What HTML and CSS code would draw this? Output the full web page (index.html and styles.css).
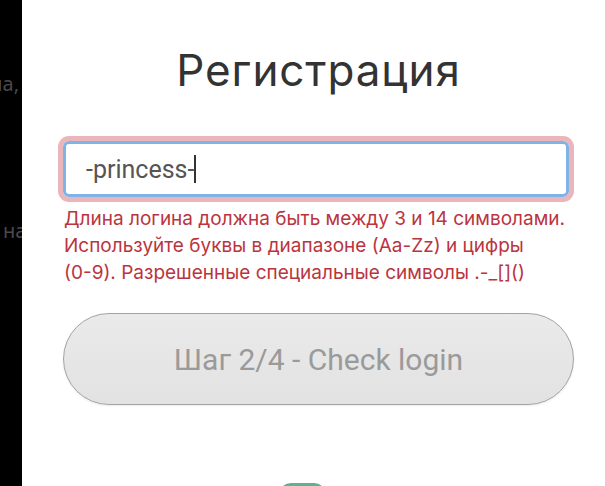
FILE: index.html
```html
<!DOCTYPE html>
<html lang="ru">
<head>
<meta charset="utf-8">
<title>Регистрация</title>
<link rel="stylesheet" href="styles.css">
</head>
<body>
<div class="screen">
  <div class="backdrop">
    <div class="peek peek-top">ла,</div>
    <div class="peek peek-mid">на</div>
  </div>
  <main class="panel">
    <h1 class="title">Регистрация</h1>
    <div class="field">
      <span class="field-value">-princess-</span><span class="caret"></span>
    </div>
    <p class="error">Длина логина должна быть между 3 и 14 символами. Используйте буквы в диапазоне <span class="nowrap">(Aa-Zz)</span> и цифры <span class="nowrap">(0-9).</span> Разрешенные специальные символы <span class="nowrap">.-_[]()</span></p>
    <button class="step-btn" type="button">Шаг 2/4 - Check login</button>
    <div class="bottom-nav">
      <span class="pill"></span>
    </div>
  </main>
</div>
</body>
</html>
```

FILE: styles.css
```css
html, body {
  margin: 0;
  padding: 0;
  height: 486px;
  overflow: hidden;
  background: #ffffff;
}

.screen {
  display: flex;
  height: 486px;
}

.backdrop {
  width: 22px;
  flex: none;
  background: #000000;
  overflow: hidden;
  display: flex;
  flex-direction: column;
  font-family: "Noto Sans", "DejaVu Sans", sans-serif;
  font-size: 20px;
  color: #4a4a4a;
  white-space: nowrap;
}

.peek {
  line-height: 24px;
  display: flex;
  flex: none;
}

.peek-top {
  margin-top: 72px;
  justify-content: flex-end;
  padding-right: 3px;
}

.peek-mid {
  margin-top: 123px;
  padding-left: 3px;
}

.panel {
  flex: 1;
  display: flex;
  flex-direction: column;
  padding: 0 31px 0 41px;
  background: #ffffff;
  overflow: hidden;
}

.panel > * {
  flex-shrink: 0;
}

.title {
  margin: 45px 0 0;
  font-family: Inter, "Noto Sans", sans-serif;
  font-weight: 400;
  font-size: 44px;
  line-height: 50px;
  color: #333333;
  text-align: center;
  letter-spacing: 0.9px;
}

.field {
  margin: 46px 5px 0 0;
  height: 50px;
  border: 3px solid #7fb3e6;
  border-radius: 6px;
  box-shadow: 0 0 0 5px #ebb6bb;
  display: flex;
  align-items: center;
  padding-left: 20px;
  font-family: Roboto, "Noto Sans", sans-serif;
  font-size: 25px;
  color: #555555;
}

.caret {
  width: 1.5px;
  height: 28px;
  background: #333333;
}

.error {
  margin: 8px 0 0 1px;
  font-family: Inter, "Noto Sans", sans-serif;
  font-size: 19px;
  line-height: 27px;
  color: #ba3440;
}

.nowrap {
  white-space: nowrap;
}

.step-btn {
  margin-top: 27px;
  height: 92px;
  border: 1px solid #a3a3a3;
  border-radius: 46px;
  background: linear-gradient(#eaeaea, #e2e2e2);
  box-shadow: 0 1px 2px rgba(0, 0, 0, 0.08);
  font-family: Roboto, "Noto Sans", sans-serif;
  font-size: 30px;
  color: #9a9a9a;
  padding: 0;
  cursor: default;
}

.bottom-nav {
  margin-top: 78px;
  display: flex;
  justify-content: center;
}

.pill {
  width: 47px;
  height: 24px;
  border-radius: 12px;
  background: #62b08d;
  margin-right: 32px;
}
```
